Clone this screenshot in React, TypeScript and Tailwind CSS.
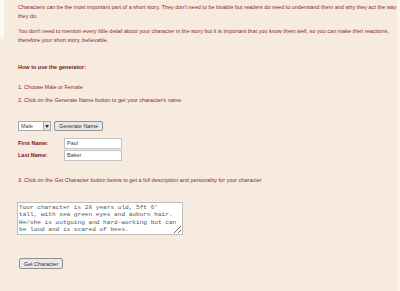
import React from "react";

const txt = "text-[#8a2838]";

export default function App() {
  return (
    <div className="w-[400px] h-[291px] flex bg-[#fbf4ec] overflow-hidden" style={{ fontFamily: '"Liberation Sans", Arial, sans-serif' }}>
      <div className="w-[397px] h-[291px] flex bg-[#f7ebdf] overflow-hidden">
        <div className="w-[4px] shrink-0">
          <div className="h-[39px] bg-[#fcf8f3]" />
        </div>
        <div className={`pl-[14px] pt-[3px] text-[5.5px] ${txt} whitespace-nowrap`}>
          <div className="leading-[9px]">Characters can be the most important part of a short story. They don't need to be lovable but readers do need to understand them and why they act the way</div>
          <div className="leading-[9px]">they do.</div>
          <div className="mt-[6px] leading-[9px]">You don't need to mention every little detail about your character in the story but it is important that you know them well, so you can make their reactions,</div>
          <div className="leading-[9px]">therefore your short story, believable.</div>
          <div className="mt-[18px] leading-[9px] font-bold text-[#761626]">How to use the generator:</div>
          <div className="mt-[11px] leading-[9px]">1. Choose Male or Female</div>
          <div className="mt-[4px] leading-[9px]">2. Click on the Generate Name button to get your character's name</div>

          <div className="mt-[16px] flex items-center gap-[3px] h-[10px]">
            <div className="w-[33px] h-[10px] bg-white border border-[#a9a9a9] flex items-center justify-between text-[#444] pl-[2px]">
              <span className="leading-[8px]">Male</span>
              <span className="w-[7px] h-[8px] bg-[#e4e4e4] border-l border-[#a9a9a9] flex items-center justify-center">
                <svg width="4" height="3" viewBox="0 0 4 3"><path d="M0 0h4L2 3z" fill="#333" /></svg>
              </span>
            </div>
            <div className="w-[49px] h-[10px] bg-[#e8e8e8] border border-[#8f8f8f] rounded-[2px] flex items-center justify-center text-[#333] leading-[8px]">Generate Name</div>
          </div>

          <div className="mt-[7px] flex items-center h-[11px]">
            <div className="w-[46px] font-bold text-[#761626]">First Name:</div>
            <div className="w-[58px] h-[11px] bg-white border border-[#c3c3c3] flex items-center pl-[2px] text-[#444]">Paul</div>
          </div>
          <div className="mt-[1px] flex items-center h-[11px]">
            <div className="w-[46px] font-bold text-[#761626]">Last Name:</div>
            <div className="w-[58px] h-[11px] bg-white border border-[#c3c3c3] flex items-center pl-[2px] text-[#444]">Baker</div>
          </div>

          <div className="mt-[15px] leading-[9px]">3. Click on the Get Character button below to get a full description and personality for your character</div>

          <textarea
            readOnly
            className="block mt-[17px] -ml-[1px] w-[166px] h-[33px] bg-white border border-[#bdbdbd] text-[#555] text-[6.1px] leading-[7.33px] px-[1px] py-[1px] overflow-hidden"
            style={{ fontFamily: '"Liberation Mono", "Courier New", monospace', resize: "both" }}
            defaultValue={"Your character is 28 years old, 5ft 6'\ntall, with sea green eyes and auburn hair.\nHe/she is outgoing and hard-working but can\nbe loud and is scared of bees."}
          />

          <div className="mt-[23px] ml-[1px] w-[44px] h-[11px] bg-[#e8e8e8] border border-[#8f8f8f] rounded-[2px] flex items-center justify-center text-[#333] leading-[8px]">Get Character</div>
        </div>
      </div>
    </div>
  );
}
